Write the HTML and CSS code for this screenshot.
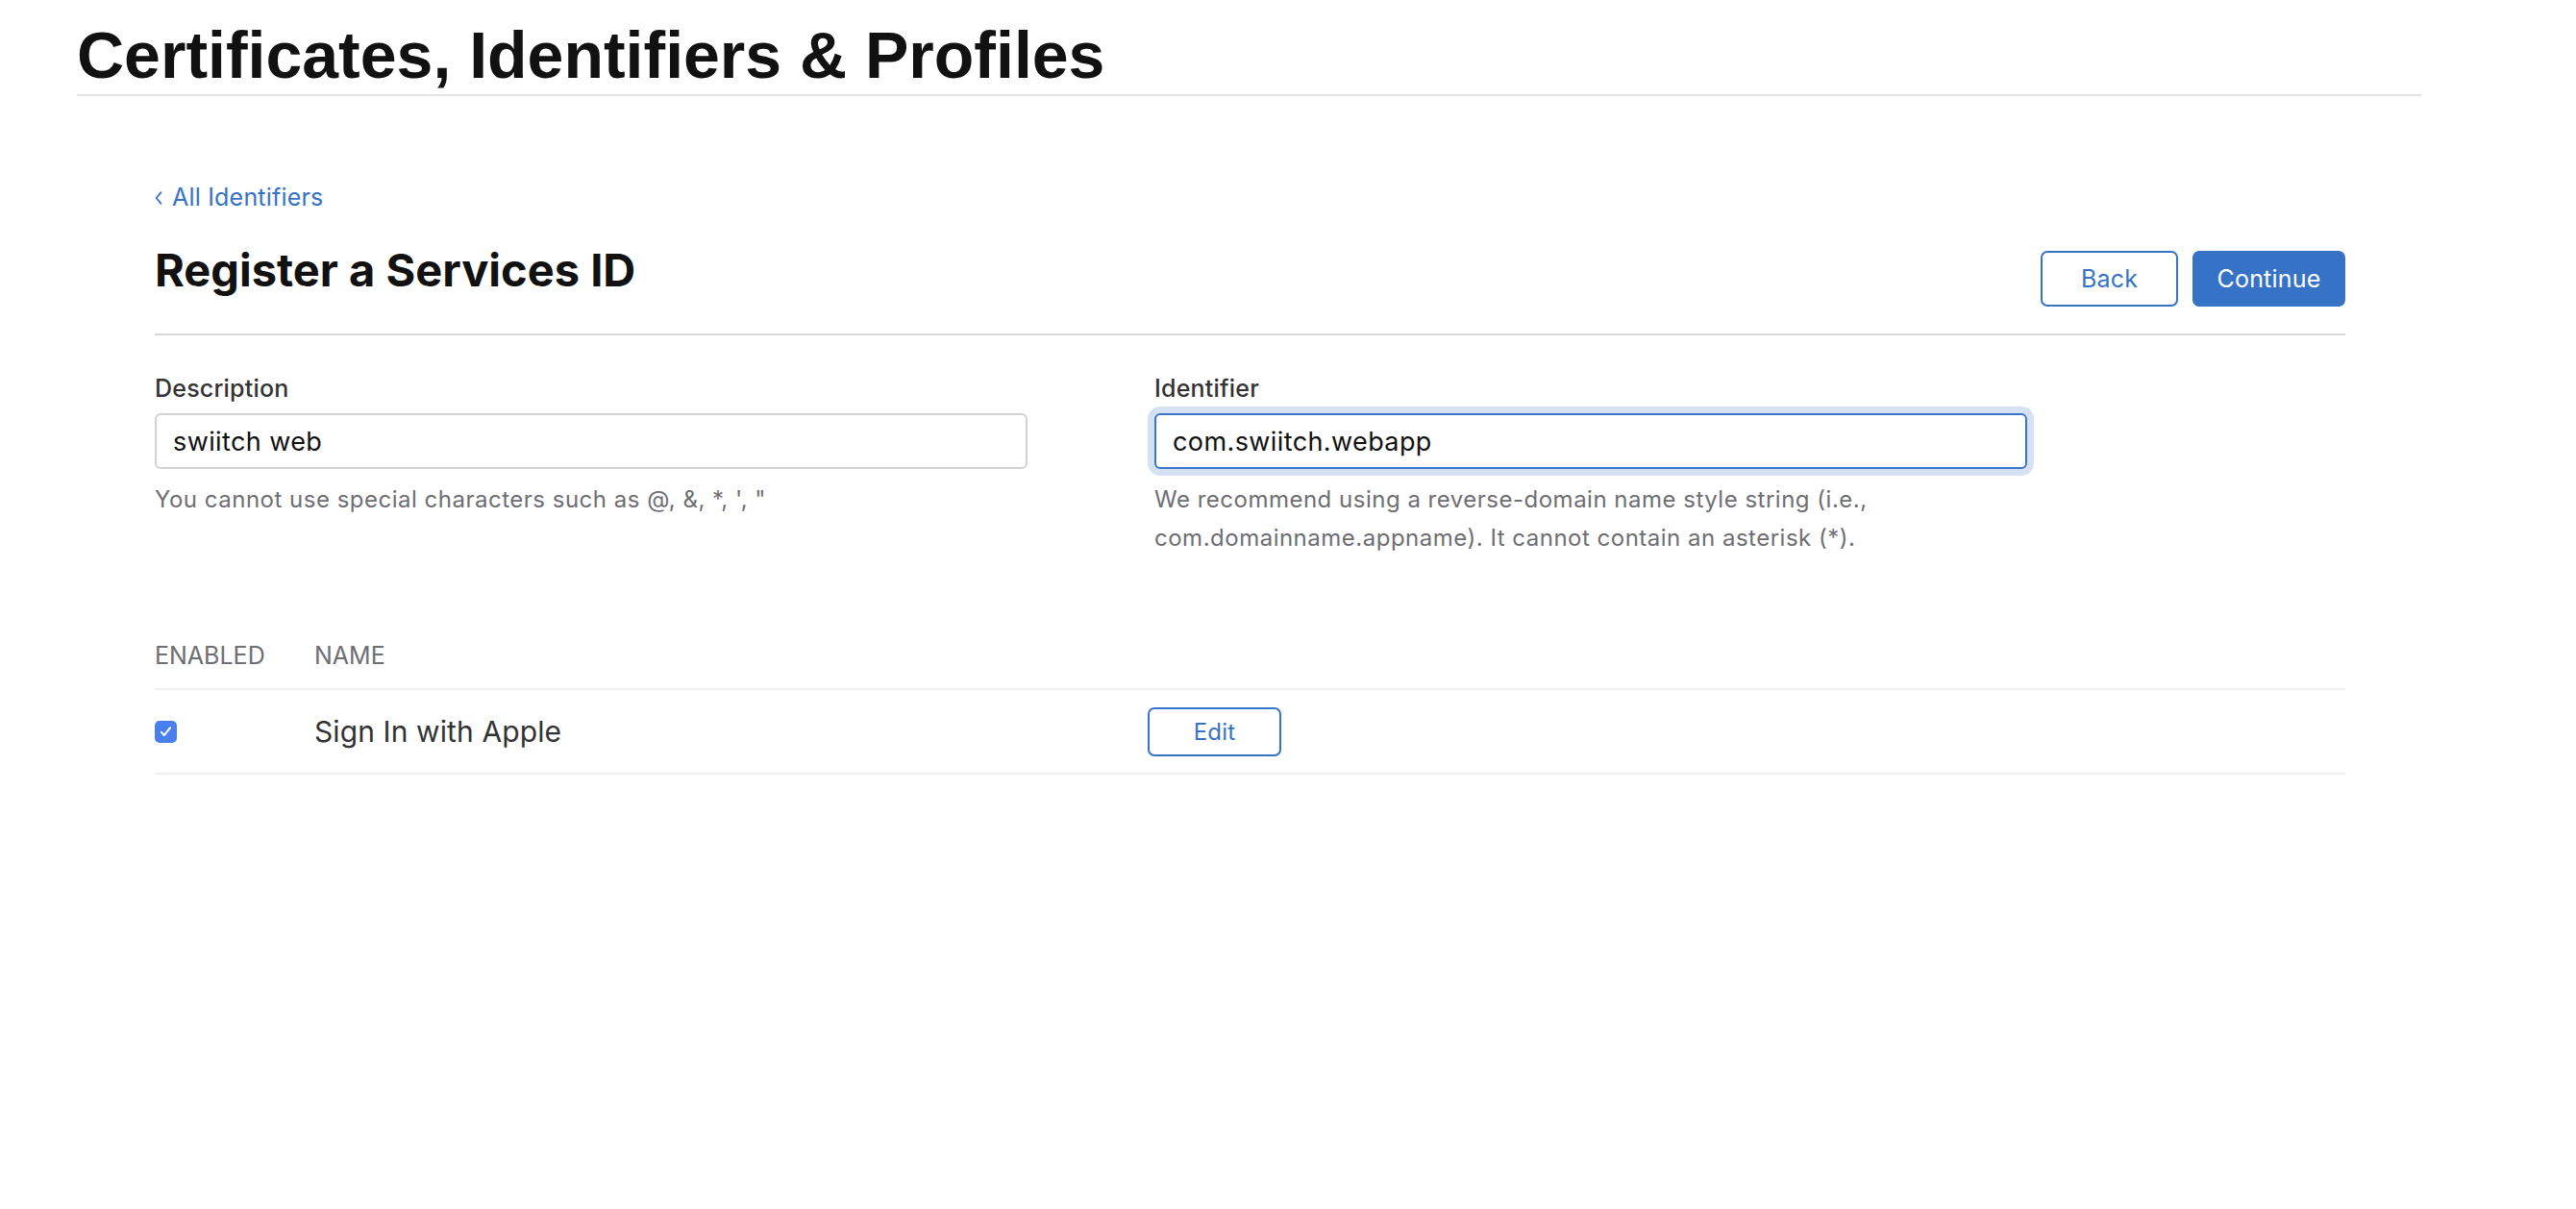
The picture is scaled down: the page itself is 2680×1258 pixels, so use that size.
FILE: index.html
```html
<!DOCTYPE html>
<html lang="en">
<head>
<meta charset="utf-8">
<title>Register a Services ID - Certificates, Identifiers &amp; Profiles</title>
<link rel="stylesheet" href="styles.css">
</head>
<body>
<header class="site-header">
  <h1 class="site-title">Certificates, Identifiers &amp; Profiles</h1>
</header>
<main class="content">
  <a class="back-link" href="#"><svg class="chev" viewBox="0 0 8 14" width="8" height="14" aria-hidden="true"><path d="M6.5 1.2L1.6 7l4.9 5.8" fill="none" stroke="#3673c6" stroke-width="1.8" stroke-linecap="round" stroke-linejoin="round"/></svg>All Identifiers</a>
  <div class="page-head">
    <h2 class="page-title">Register a Services ID</h2>
    <div class="actions">
      <button class="btn btn-outline btn-back" type="button">Back</button>
      <button class="btn btn-primary btn-continue" type="button">Continue</button>
    </div>
  </div>
  <div class="fields">
    <div class="field">
      <label class="field-label" for="desc">Description</label>
      <input class="field-input" id="desc" type="text" value="swiitch web" readonly>
      <p class="field-hint">You cannot use special characters such as @, &amp;, *, ', "</p>
    </div>
    <div class="field">
      <label class="field-label" for="ident">Identifier</label>
      <input class="field-input is-focused" id="ident" type="text" value="com.swiitch.webapp" readonly>
      <p class="field-hint">We recommend using a reverse-domain name style string (i.e., com.domainname.appname). It cannot contain an asterisk (*).</p>
    </div>
  </div>
  <table class="caps">
    <thead>
      <tr>
        <th class="col-enabled">ENABLED</th>
        <th class="col-name">NAME</th>
        <th class="col-action"></th>
      </tr>
    </thead>
    <tbody>
      <tr>
        <td class="col-enabled"><span class="checkbox" role="checkbox" aria-checked="true"><svg viewBox="0 0 24 24" width="17" height="17"><path d="M5.5 12.5l4 4.5L18.5 6" fill="none" stroke="#fff" stroke-width="2.8" stroke-linecap="round" stroke-linejoin="round"/></svg></span></td>
        <td class="col-name cap-name">Sign In with Apple</td>
        <td class="col-action"><button class="btn btn-outline btn-edit" type="button">Edit</button></td>
      </tr>
    </tbody>
  </table>
</main>
</body>
</html>
```

FILE: styles.css
```css
* { box-sizing: border-box; }

html, body {
  margin: 0;
  padding: 0;
  background: #ffffff;
}

body {
  font-family: Inter, "Noto Sans", "Liberation Sans", sans-serif;
  color: #1d1d1f;
}

.site-header {
  margin-left: 80px;
  width: 2439px;
  border-bottom: 2px solid #e3e3e3;
}

.site-title {
  margin: 0;
  padding: 23px 0 7px;
  font-family: "Liberation Sans", Arial, sans-serif;
  font-weight: 700;
  font-size: 68px;
  line-height: 68px;
  color: #111111;
}

.content {
  margin-left: 161px;
  width: 2279px;
  padding-top: 87px;
}

.back-link {
  display: inline-flex;
  align-items: center;
  gap: 10px;
  font-size: 25px;
  line-height: 36px;
  height: 36px;
  color: #3673c6;
  text-decoration: none;
  letter-spacing: 0.2px;
}

.chev {
  display: block;
  margin-top: 2px;
}

.page-head {
  display: flex;
  justify-content: space-between;
  align-items: flex-start;
  margin-top: 30px;
  padding-bottom: 28px;
  border-bottom: 2px solid #d8d8d8;
}

.page-title {
  margin: 0;
  font-size: 47px;
  line-height: 56px;
  font-weight: 700;
  color: #111111;
}

.actions {
  display: flex;
  gap: 15px;
  margin-top: 8px;
}

.btn {
  font-family: inherit;
  font-size: 25px;
  height: 58px;
  border-radius: 7px;
  border: 2px solid #3673c6;
  cursor: pointer;
  padding: 0;
  letter-spacing: 0.2px;
}

.btn-outline {
  background: #ffffff;
  color: #3673c6;
}

.btn-primary {
  background: #3673c6;
  color: #ffffff;
}

.btn-back { width: 143px; }
.btn-continue { width: 159px; }

.fields {
  display: flex;
  gap: 132px;
  margin-top: 39px;
}

.field {
  width: 908px;
}

.field-label {
  display: block;
  font-size: 25px;
  line-height: 32px;
  font-weight: 500;
  letter-spacing: 0.2px;
  color: #333333;
}

.field-input {
  display: block;
  width: 100%;
  height: 58px;
  margin-top: 10px;
  padding: 0 17px;
  border: 2px solid #d2d2d2;
  border-radius: 6px;
  font-family: inherit;
  font-size: 27px;
  letter-spacing: 0.4px;
  color: #111111;
  background: #ffffff;
  outline: none;
}

.field-input.is-focused {
  border-color: #3a74c8;
  box-shadow: 0 0 0 7px #d6e2f3;
}

.field-hint {
  margin: 12px 0 0;
  font-size: 24px;
  line-height: 40px;
  letter-spacing: 0.5px;
  color: #6e6e73;
}

.caps {
  width: 100%;
  margin-top: 86px;
  border-collapse: collapse;
}

.caps th {
  text-align: left;
  font-weight: 400;
  font-size: 25px;
  line-height: 32px;
  color: #6e6e73;
  padding: 0 0 18px;
  border-bottom: 2px solid #f0f0f0;
}

.caps td {
  height: 88px;
  padding: 0;
  vertical-align: middle;
  border-bottom: 2px solid #f0f0f0;
}

.col-enabled { width: 166px; }
.col-name { width: 867px; }

.cap-name {
  font-size: 30px;
  letter-spacing: 0.1px;
  color: #333333;
}

.checkbox {
  display: flex;
  align-items: center;
  justify-content: center;
  width: 23px;
  height: 23px;
  border-radius: 5px;
  background: #4a80ee;
}

.btn-edit {
  width: 139px;
  height: 51px;
  font-size: 24px;
}
```
